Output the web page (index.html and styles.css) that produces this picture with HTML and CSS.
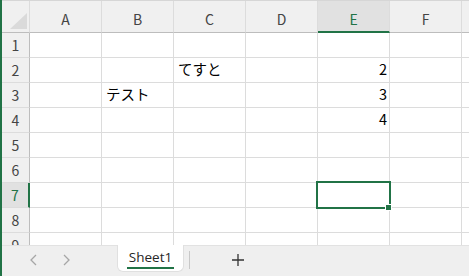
FILE: index.html
```html
<!DOCTYPE html>
<html lang="ja">

<head>
	<meta charset="UTF-8">
	<meta name="viewport" content="width=device-width, initial-scale=1.0">
	<title>Sheet1</title>
	<link rel="stylesheet" href="styles.css">
</head>

<body>
	<div class="app">

		<!-- Grid -->
		<div class="sheet">
			<div class="grid">
				<div class="corner"><span class="corner-tri"></span></div>
				<div class="col-head">A</div>
				<div class="col-head">B</div>
				<div class="col-head">C</div>
				<div class="col-head">D</div>
				<div class="col-head active">E</div>
				<div class="col-head">F</div>
				<div class="col-head"></div>

				<div class="row-head">1</div>
				<div class="cell"></div><div class="cell"></div><div class="cell"></div><div class="cell"></div><div class="cell"></div><div class="cell"></div><div class="cell"></div>

				<div class="row-head">2</div>
				<div class="cell"></div><div class="cell"></div><div class="cell">てすと</div><div class="cell"></div><div class="cell num">2</div><div class="cell"></div><div class="cell"></div>

				<div class="row-head">3</div>
				<div class="cell"></div><div class="cell">テスト</div><div class="cell"></div><div class="cell"></div><div class="cell num">3</div><div class="cell"></div><div class="cell"></div>

				<div class="row-head">4</div>
				<div class="cell"></div><div class="cell"></div><div class="cell"></div><div class="cell"></div><div class="cell num">4</div><div class="cell"></div><div class="cell"></div>

				<div class="row-head">5</div>
				<div class="cell"></div><div class="cell"></div><div class="cell"></div><div class="cell"></div><div class="cell"></div><div class="cell"></div><div class="cell"></div>

				<div class="row-head">6</div>
				<div class="cell"></div><div class="cell"></div><div class="cell"></div><div class="cell"></div><div class="cell"></div><div class="cell"></div><div class="cell"></div>

				<div class="row-head active">7</div>
				<div class="cell"></div><div class="cell"></div><div class="cell"></div><div class="cell"></div><div class="cell selected"></div><div class="cell"></div><div class="cell"></div>

				<div class="row-head">8</div>
				<div class="cell"></div><div class="cell"></div><div class="cell"></div><div class="cell"></div><div class="cell"></div><div class="cell"></div><div class="cell"></div>

				<div class="row-head">9</div>
				<div class="cell"></div><div class="cell"></div><div class="cell"></div><div class="cell"></div><div class="cell"></div><div class="cell"></div><div class="cell"></div>
			</div>
		</div>

		<!-- Sheet tabs -->
		<div class="tabs">
			<div class="tab-nav">
				<svg width="10" height="12" viewBox="0 0 10 12"><path d="M7 1 L2 6 L7 11" fill="none" stroke="#a6a6a6" stroke-width="1.3"/></svg>
				<svg width="10" height="12" viewBox="0 0 10 12"><path d="M3 1 L8 6 L3 11" fill="none" stroke="#a6a6a6" stroke-width="1.3"/></svg>
			</div>
			<div class="tab"><span class="tab-label">Sheet1</span></div>
			<div class="tab-sep"></div>
			<div class="tab-add">
				<svg width="12" height="12" viewBox="0 0 12 12"><path d="M6 0 V12 M0 6 H12" fill="none" stroke="#333" stroke-width="1.3"/></svg>
			</div>
		</div>

	</div>
</body>

</html>
```

FILE: styles.css
```css
body
{
	margin: 0;
	width: 469px;
	height: 276px;
	overflow: hidden;
	background-color: #ffffff;
	font-family: "Noto Sans CJK JP", sans-serif;
}

.app
{
	height: 276px;
	border-left: 2px solid #217346;
	display: flex;
	flex-direction: column;
}

.sheet
{
	height: 244px;
	overflow: hidden;
	border-top: 1px solid #d6d6d6;
}

.grid
{
	display: grid;
	grid-template-columns: 28px repeat(7, 72px);
	grid-template-rows: 32px;
	grid-auto-rows: 25px;
}

.grid > div
{
	box-sizing: border-box;
	border-right: 1px solid #dcdcdc;
	border-bottom: 1px solid #dcdcdc;
}

.corner
{
	background-color: #f0f0f0;
	display: flex;
	justify-content: flex-end;
	align-items: flex-end;
	padding: 0 2px 3px 0;
}

.grid > .corner,
.grid > .col-head
{
	border-bottom-color: #bdbdbd;
}

.corner-tri
{
	width: 0;
	height: 0;
	border-left: 17px solid transparent;
	border-bottom: 16px solid #dadada;
}

.col-head
{
	background-color: #f0f0f0;
	color: #444444;
	font-size: 14px;
	display: flex;
	justify-content: center;
	align-items: flex-end;
	padding-bottom: 3px;
}

.grid > .col-head.active
{
	background-color: #e1e1e1;
	color: #217346;
	border-bottom: 2px solid #217346;
	padding-bottom: 2px;
}

.row-head
{
	background-color: #f0f0f0;
	color: #444444;
	font-size: 14px;
	display: flex;
	justify-content: center;
	align-items: center;
	padding-bottom: 1px;
}

.grid > .row-head
{
	border-right-color: #bdbdbd;
}

.grid > .row-head.active
{
	background-color: #e1e1e1;
	color: #217346;
	border-right: 2px solid #217346;
}

.cell
{
	font-size: 14.5px;
	color: #000000;
	display: flex;
	align-items: flex-end;
	padding: 0 4px 3px 4px;
	white-space: nowrap;
}

.num
{
	justify-content: flex-end;
	padding-right: 2px;
}

.selected
{
	position: relative;
}

.selected::after
{
	content: "";
	position: absolute;
	top: -2px;
	left: -2px;
	right: -2px;
	bottom: -2px;
	border: 2px solid #217346;
	z-index: 2;
}

.selected::before
{
	content: "";
	position: absolute;
	right: -3px;
	bottom: -4px;
	width: 5px;
	height: 5px;
	background-color: #217346;
	border: 1px solid #ffffff;
	z-index: 3;
}

.tabs
{
	flex: 1;
	background-color: #efefef;
	border-top: 1px solid #e2e2e2;
	display: flex;
	align-items: flex-start;
}

.tab-nav
{
	box-sizing: border-box;
	width: 115px;
	padding: 8px 0 0 27px;
	display: flex;
	gap: 22px;
}

.tab
{
	width: 67px;
	height: 27px;
	margin-top: -1px;
	box-sizing: border-box;
	background-color: #ffffff;
	border: 1px solid #e0e0e0;
	border-top: none;
	border-radius: 0 0 6px 6px;
	display: flex;
	justify-content: center;
	padding-top: 3px;
}

.tab-label
{
	font-family: "Open Sans", sans-serif;
	font-size: 13.5px;
	color: #262626;
	line-height: 18px;
	padding: 0 2px 1px 2px;
	border-bottom: 2px solid #217346;
	height: 18px;
}

.tab-sep
{
	width: 1px;
	height: 18px;
	margin: 5px 0 0 5px;
	background-color: #c8c8c8;
}

.tab-add
{
	margin: 8px 0 0 42px;
	display: flex;
}
```
